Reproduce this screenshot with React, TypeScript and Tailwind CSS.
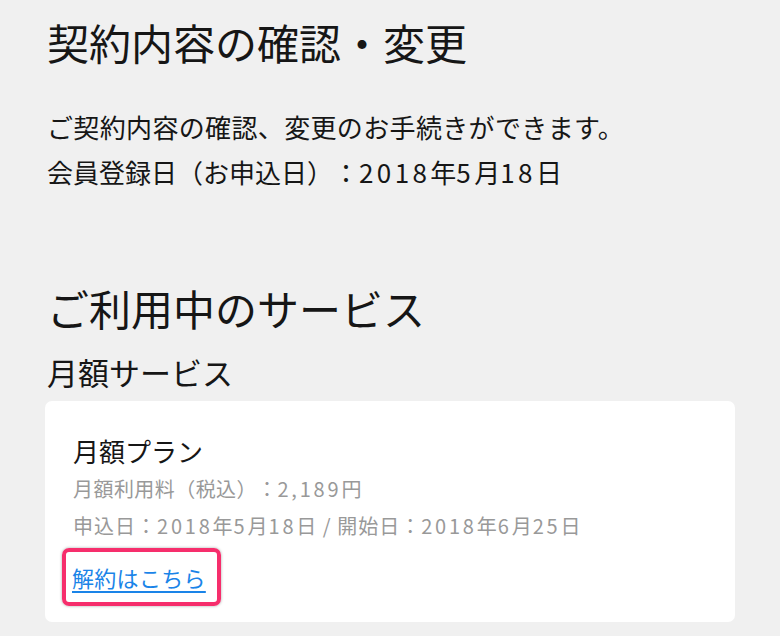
import React from "react";

function N({ children, t }: { children: React.ReactNode; t: "top" | "card" }) {
  return <span className={t === "top" ? "tracking-[3.4px]" : "tracking-[2.8px]"}>{children}</span>;
}

export default function App() {
  return (
    <div
      className="w-[780px] h-[636px] overflow-hidden bg-[#f0f0f0] text-[#161616] [text-spacing-trim:space-all]"
      style={{ fontFamily: '"Noto Sans CJK JP", "Noto Sans", sans-serif' }}
    >
      <div className="pl-[47px] pt-[14px]">
        <h1 className="text-[42px] leading-[56px] font-normal">契約内容の確認・変更</h1>
        <p className="mt-[34px] text-[26px] leading-[45px] tracking-[0.35px]">ご契約内容の確認、変更のお手続きができます。</p>
        <p className="text-[26px] leading-[45px]">
          会員登録日（お申込日）：<N t="top">2018</N>年<N t="top">5</N>月<N t="top">18</N>日
        </p>
        <h2 className="mt-[86px] text-[42px] leading-[56px] font-normal">ご利用中のサービス</h2>
        <h3 className="mt-[14px] text-[31px] leading-[44px] font-normal">月額サービス</h3>
      </div>
      <div className="ml-[45px] mt-[7px] w-[690px] rounded-[7px] bg-white pl-[28px] pt-[32px] pb-[16px]">
        <div className="text-[26px] leading-[36px] text-[#161616]">月額プラン</div>
        <div className="mt-[2px] text-[20px] leading-[36px] tracking-[0.44px] text-[#999999]">
          月額利用料（税込）：<N t="card">2,189</N>円
        </div>
        <div className="text-[20px] leading-[38px] tracking-[1px] text-[#999999]">
          申込日：<N t="card">2018</N>年<N t="card">5</N>月<N t="card">18</N>日 / 開始日：<N t="card">2018</N>年<N t="card">6</N>月<N t="card">25</N>日
        </div>
        <div className="mt-[3px] ml-[-11px] inline-flex h-[58px] items-center rounded-[7px] border-4 border-[#f62e6c] pl-[6px] pr-[11px] shadow-[0_0_3px_rgba(0,0,0,0.35)]">
          <a href="#" className="text-[22px] leading-[30px] tracking-[0.3px] text-[#1a84e8] underline underline-offset-[4px]">解約はこちら</a>
        </div>
      </div>
    </div>
  );
}
